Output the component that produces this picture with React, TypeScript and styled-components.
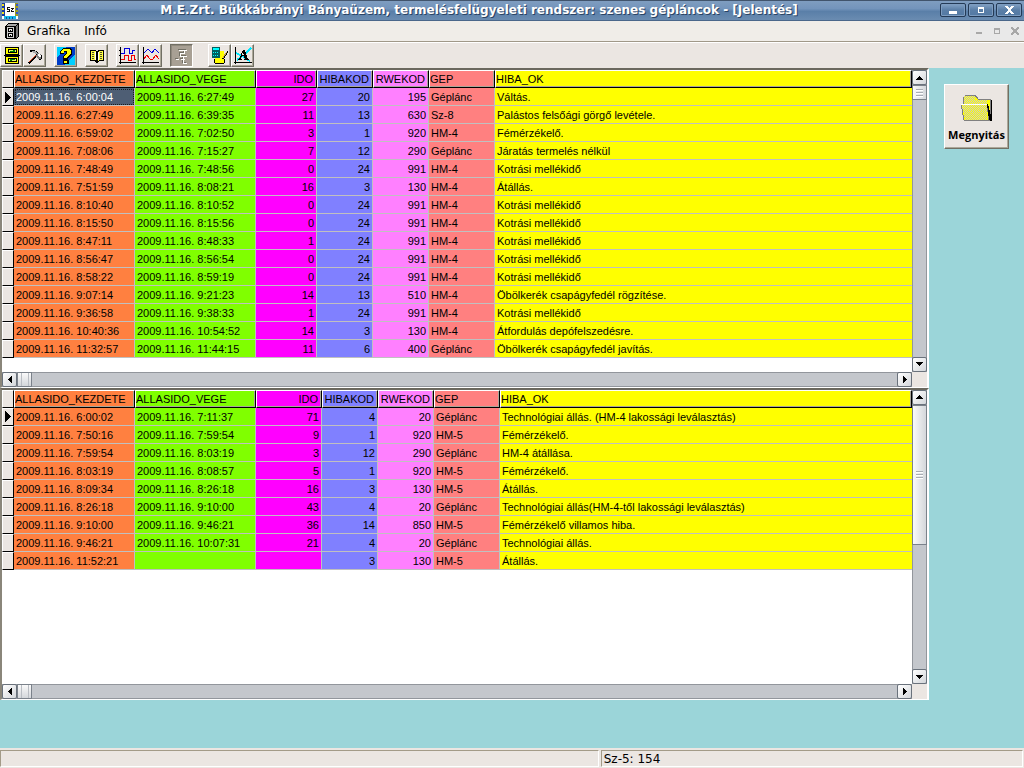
import React from 'react';
import styled, { createGlobalStyle, css } from 'styled-components';

const face = '#ebe6e2';
const uiFont = '"DejaVu Sans", Verdana, sans-serif';
const gridFont = '"Liberation Sans", Arial, sans-serif';

const GlobalStyle = createGlobalStyle`
  *, *::before, *::after { box-sizing: border-box; }
  body { margin: 0; background: #9bd5d9; font-family: ${uiFont}; font-size: 12px; color: #000; }
  button { font: inherit; color: inherit; border-radius: 0; margin: 0; padding: 0; }
`;

const Window = styled.div`
  min-height: 100vh;
  display: flex;
  flex-direction: column;
`;

const TitleBar = styled.header`
  height: 21px;
  display: flex;
  align-items: center;
  padding: 0 2px;
  border-top: 1px solid #41546c;
  border-bottom: 1px solid #4a678a;
  background: linear-gradient(#7f9dc0, #7394bb 40%, #5a7fa8 55%, #6a8cb1);
`;

const Title = styled.h1`
  flex: 1;
  margin: 0;
  text-align: center;
  font-size: 12px;
  line-height: 19px;
  font-weight: bold;
  color: #fff;
  white-space: nowrap;
  text-shadow: 1px 1px 0 #2a4364;
`;

const CaptionButtons = styled.div`
  display: flex;
  gap: 2px;
  padding-bottom: 1px;
`;

const CaptionButton = styled.button`
  width: 26px;
  height: 14px;
  display: flex;
  align-items: center;
  justify-content: center;
  border: 1px solid #243a56;
  border-radius: 2px;
  background: linear-gradient(#83a2c5, #5a7ea7 50%, #5379a3);
  box-shadow: inset 0 0 0 1px #7d9cc0;
`;

const MenuBar = styled.nav`
  height: 21px;
  display: flex;
  align-items: center;
  padding: 0 0 0 5px;
  background: #f0ede8;
  border-bottom: 1px solid #a09888;
`;

const MenuButton = styled.button`
  border: 0;
  background: none;
  height: 20px;
  padding: 0 7px;
  line-height: 18px;
`;

const MenuItems = styled.div`
  flex: 1;
  display: flex;
  padding-left: 1px;
`;

const ChildButtons = styled.div`
  display: flex;
  align-self: stretch;
  background: #e9e9e9;
`;

const ChildButton = styled.button`
  width: 18px;
  display: flex;
  align-items: center;
  justify-content: center;
  border: 0;
  background: none;
`;

const Toolbar = styled.div`
  height: 26px;
  display: flex;
  align-items: flex-start;
  gap: 8px;
  padding: 1px 0;
  background: ${face};
  border-top: 1px solid #fff;
`;

const ToolGroup = styled.div`
  display: flex;
  &:last-child { margin-left: 7px; }
`;

const ToolButton = styled.button<{ $down?: boolean }>`
  width: 23px;
  height: 23px;
  display: flex;
  align-items: center;
  justify-content: center;
  background: ${p => (p.$down ? '#a8a094' : face)};
  border: 1px solid;
  border-color: ${p => (p.$down ? '#716f64 #fff #fff #716f64' : '#fff #716f64 #716f64 #fff')};
  box-shadow: ${p => (p.$down ? 'inset 1px 1px 0 #8f897c' : 'inset -1px -1px 0 #aca899')};
`;

const Workspace = styled.main`
  flex: 1;
  display: flex;
  padding-bottom: 48px;
`;

const Panels = styled.div`
  flex: 1;
  min-width: 0;
  display: flex;
  flex-direction: column;
`;

const Panel = styled.section<{ $share: number }>`
  flex: ${p => p.$share} 0 0;
  display: grid;
  grid-template-columns: minmax(0, 1fr) 15px;
  grid-template-rows: minmax(0, 1fr) 15px;
  background: ${face};
  border: solid;
  border-width: 2px 2px 1px 2px;
  border-color: #6b685e #fff #fff #8a867a;
`;

const Viewport = styled.div`
  overflow: hidden;
  background: #fff;
`;

const Table = styled.table`
  width: 100%;
  table-layout: fixed;
  border-collapse: separate;
  border-spacing: 0;
  font-family: ${gridFont};
  font-size: 11px;
  line-height: 16px;
  white-space: nowrap;
`;

type Align = 'left' | 'right';

const HeadCell = styled.th<{ $bg: string; $align?: Align }>`
  height: 18px;
  padding: 0 3px 0 0;
  overflow: hidden;
  font-weight: normal;
  text-align: ${p => p.$align || 'left'};
  background: ${p => p.$bg};
  border: 1px solid;
  border-color: #fff #000 #000 #fff;
  box-shadow: inset -1px -1px 0 #a9a599;
`;

const Cell = styled.td<{ $bg: string; $align?: Align; $selected?: boolean }>`
  height: 18px;
  padding: 1px 2px 0;
  overflow: hidden;
  text-align: ${p => p.$align || 'left'};
  background: ${p => p.$bg};
  border: solid #c0c0c0;
  border-width: 0 1px 1px 0;
  &:last-child { border-right: 0; }
  ${p => p.$selected && css`
    background: #4e5e74;
    color: #fff;
    outline: 1px dotted #1c1c1c;
    outline-offset: -2px;
  `}
`;

const Indicator = styled.td`
  height: 18px;
  padding: 0;
  background: ${face};
  border: 1px solid;
  border-color: #fff #000 #000 #fff;
  svg { display: block; margin: 0 auto; }
`;

const ScrollTrack = styled.div<{ $vertical?: boolean }>`
  display: flex;
  flex-direction: ${p => (p.$vertical ? 'column' : 'row')};
  background: #c4c7cc;
  border: solid #92969c;
  border-width: ${p => (p.$vertical ? '0 1px' : '1px 0')};
`;

const ArrowButton = styled.button<{ $vertical?: boolean; $end?: boolean }>`
  flex: none;
  width: 15px;
  height: 15px;
  margin: ${p => (p.$vertical ? '0 -1px' : '-1px 0')};
  ${p => p.$end && (p.$vertical ? 'margin-top: auto;' : 'margin-left: auto;')}
  display: flex;
  align-items: center;
  justify-content: center;
  background: linear-gradient(135deg, #fff, #d3d6da);
  border: 1px solid #6a727c;
  border-radius: 2px;
`;

const Thumb = styled.div<{ $vertical?: boolean; $size: string }>`
  flex: 0 0 ${p => p.$size};
  display: flex;
  align-items: center;
  justify-content: center;
  border: 1px solid #7b828b;
  margin: ${p => (p.$vertical ? '0 -1px' : '-1px 0')};
  background: linear-gradient(${p => (p.$vertical ? '90deg' : '180deg')}, #fafafa, #d4d7db);
`;

const Side = styled.aside`
  width: 95px;
  padding: 16px 14px 0 15px;
`;

const OpenButton = styled.button`
  width: 65px;
  height: 65px;
  display: flex;
  flex-direction: column;
  align-items: center;
  justify-content: flex-end;
  gap: 5px;
  padding-bottom: 5px;
  background: ${face};
  border: 1px solid;
  border-color: #fff #716f64 #716f64 #fff;
  box-shadow: inset -1px -1px 0 #aca899;
  font-size: 11px;
  font-weight: bold;
  font-family: "Open Sans", "Liberation Sans", sans-serif;
  line-height: 16px;
  white-space: nowrap;
`;

const StatusBar = styled.footer`
  height: 20px;
  display: flex;
  gap: 2px;
  padding: 2px 1px 1px 0;
  background: ${face};
`;

const StatusPane = styled.div<{ $grow: number }>`
  flex: ${p => p.$grow} 0 0;
  padding-left: 2px;
  line-height: 16px;
  border: 1px solid;
  border-color: #a39b88 #fff #fff #a39b88;
`;

interface Column { name: string; bg: string; align?: Align; width?: number }

const makeColumns = (idoWidth: number): Column[] => [
  { name: 'ALLASIDO_KEZDETE', bg: '#ff8040', width: 121 },
  { name: 'ALLASIDO_VEGE', bg: '#80ff00', width: 121 },
  { name: 'IDO', bg: '#ff00ff', align: 'right', width: idoWidth },
  { name: 'HIBAKOD', bg: '#8080ff', align: 'right', width: 56 },
  { name: 'RWEKOD', bg: '#ff80ff', align: 'right', width: 56 },
  { name: 'GEP', bg: '#ff8080', width: 66 },
  { name: 'HIBA_OK', bg: '#ffff00' },
];

const D = '2009.11.16. ';
const upperRows = [
  [D + '6:00:04', D + '6:27:49', '27', '20', '195', 'Géplánc', 'Váltás.'],
  [D + '6:27:49', D + '6:39:35', '11', '13', '630', 'Sz-8', 'Palástos felsőági görgő levétele.'],
  [D + '6:59:02', D + '7:02:50', '3', '1', '920', 'HM-4', 'Fémérzékelő.'],
  [D + '7:08:06', D + '7:15:27', '7', '12', '290', 'Géplánc', 'Járatás termelés nélkül'],
  [D + '7:48:49', D + '7:48:56', '0', '24', '991', 'HM-4', 'Kotrási mellékidő'],
  [D + '7:51:59', D + '8:08:21', '16', '3', '130', 'HM-4', 'Átállás.'],
  [D + '8:10:40', D + '8:10:52', '0', '24', '991', 'HM-4', 'Kotrási mellékidő'],
  [D + '8:15:50', D + '8:15:56', '0', '24', '991', 'HM-4', 'Kotrási mellékidő'],
  [D + '8:47:11', D + '8:48:33', '1', '24', '991', 'HM-4', 'Kotrási mellékidő'],
  [D + '8:56:47', D + '8:56:54', '0', '24', '991', 'HM-4', 'Kotrási mellékidő'],
  [D + '8:58:22', D + '8:59:19', '0', '24', '991', 'HM-4', 'Kotrási mellékidő'],
  [D + '9:07:14', D + '9:21:23', '14', '13', '510', 'HM-4', 'Öbölkerék csapágyfedél rögzítése.'],
  [D + '9:36:58', D + '9:38:33', '1', '24', '991', 'HM-4', 'Kotrási mellékidő'],
  [D + '10:40:36', D + '10:54:52', '14', '3', '130', 'HM-4', 'Átfordulás depófelszedésre.'],
  [D + '11:32:57', D + '11:44:15', '11', '6', '400', 'Géplánc', 'Öbölkerék csapágyfedél javítás.'],
];
const lowerRows = [
  [D + '6:00:02', D + '7:11:37', '71', '4', '20', 'Géplánc', 'Technológiai állás. (HM-4 lakossági leválasztás)'],
  [D + '7:50:16', D + '7:59:54', '9', '1', '920', 'HM-5', 'Fémérzékelő.'],
  [D + '7:59:54', D + '8:03:19', '3', '12', '290', 'Géplánc', 'HM-4 átállása.'],
  [D + '8:03:19', D + '8:08:57', '5', '1', '920', 'HM-5', 'Fémérzékelő.'],
  [D + '8:09:34', D + '8:26:18', '16', '3', '130', 'HM-5', 'Átállás.'],
  [D + '8:26:18', D + '9:10:00', '43', '4', '20', 'Géplánc', 'Technológiai állás(HM-4-től lakossági leválasztás)'],
  [D + '9:10:00', D + '9:46:21', '36', '14', '850', 'HM-5', 'Fémérzékelő villamos hiba.'],
  [D + '9:46:21', D + '10:07:31', '21', '4', '20', 'Géplánc', 'Technológiai állás.'],
  [D + '11:52:21', '', '', '3', '130', 'HM-5', 'Átállás.'],
];

const Svg = ({ w, h, children }: { w: number; h: number; children: React.ReactNode }) => (
  <svg width={w} height={h} viewBox={`0 0 ${w} ${h}`} shapeRendering="crispEdges" aria-hidden="true">
    {children}
  </svg>
);

const arrows = {
  up: 'M3 0h1v1h1v1h1v1h1v1H0V3h1V2h1V1h1z',
  down: 'M0 0h7v1H6v1H5v1H4v1H3V3H2V2H1V1H0z',
  left: 'M4 0v7H3V6H2V5H1V4H0V3h1V2h1V1h1V0z',
  right: 'M0 0h1v1h1v1h1v1h1v1H3v1H2v1H1v1H0z',
};

const Arrow = ({ dir }: { dir: keyof typeof arrows }) => {
  const tall = dir === 'left' || dir === 'right';
  return <Svg w={tall ? 4 : 7} h={tall ? 7 : 4}><path d={arrows[dir]} /></Svg>;
};

function ScrollBar({ vertical, size, grip }: { vertical?: boolean; size: string; grip?: boolean }) {
  return (
    <ScrollTrack $vertical={vertical}>
      <ArrowButton $vertical={vertical} aria-label={vertical ? 'Fel' : 'Balra'}><Arrow dir={vertical ? 'up' : 'left'} /></ArrowButton>
      <Thumb $vertical={vertical} $size={size}>
        {grip
          ? <Svg w={7} h={8}><path d="M0 0h7v1H0zM0 3h7v1H0zM0 6h7v1H0z" fill="#a9adb4" /><path d="M0 1h7v1H0zM0 4h7v1H0zM0 7h7v1H0z" fill="#fff" /></Svg>
          : <Svg w={9} h={13}><path d="M1 0h1v13H1zM8 0h1v13H8z" fill="#b9bdc3" /></Svg>}
      </Thumb>
      <ArrowButton $vertical={vertical} $end aria-label={vertical ? 'Le' : 'Jobbra'}><Arrow dir={vertical ? 'down' : 'right'} /></ArrowButton>
    </ScrollTrack>
  );
}

interface GridProps { share: number; idoWidth: number; rows: string[][]; thumb: string; selected?: boolean }

function DataGrid({ share, idoWidth, rows, thumb, selected }: GridProps) {
  const columns = makeColumns(idoWidth);
  return (
    <Panel $share={share}>
      <Viewport>
        <Table>
          <colgroup>
            <col width={12} />
            {columns.map(c => <col key={c.name} width={c.width} />)}
          </colgroup>
          <thead>
            <tr>
              <Indicator />
              {columns.map(c => <HeadCell key={c.name} $bg={c.bg} $align={c.align}>{c.name}</HeadCell>)}
            </tr>
          </thead>
          <tbody>
            {rows.map((row, r) => (
              <tr key={row[0]}>
                <Indicator>{r === 0 && <Svg w={6} h={11}><path d="M0 0h1v1h1v1h1v1h1v1h1v1h1v1H5v1H4v1H3v1H2v1H1v1H0z" /></Svg>}</Indicator>
                {row.map((v, i) => (
                  <Cell key={i} $bg={columns[i].bg} $align={columns[i].align} $selected={selected && r === 0 && i === 0}>{v}</Cell>
                ))}
              </tr>
            ))}
          </tbody>
        </Table>
      </Viewport>
      <ScrollBar vertical size={thumb} grip />
      <ScrollBar size="15px" />
    </Panel>
  );
}

const AppIcon = () => (
  <Svg w={16} h={16}>
    <path d="M0 0h16v16H0z" fill="#fff" />
    <path d="M0 0h3v13H0z" fill="#173a9c" />
    <path d="M0 1h2v2H0zM0 5h2v2H0zM0 9h2v2H0z" fill="#f5e51b" />
    <path d="M13 0h3v13h-3z" fill="#9b9b20" />
    <path d="M14 1h2v2h-2zM14 5h2v2h-2zM14 9h2v2h-2z" fill="#3558cc" />
    <path d="M2 13h12v3H2z" fill="#14b8e8" />
    <path d="M4 14h1v2H4zM7 14h1v2H7zM10 14h1v2h-1z" fill="#0c4f9c" />
    <path d="M5 4h3v1H5zM5 5h1v1H5zM5 6h3v1H5zM7 7h1v1H7zM5 8h3v1H5zM9 5h3v1H9zM10 6h1v1h-1zM9 7h1v1H9zM9 8h3v1H9z" fill="#111" />
  </Svg>
);

const CabinetIcon = () => (
  <Svg w={14} h={16}>
    <path d="M3 0h10l1 1v12l-3 3H1l-1-1V3z" />
    <path d="M3 1h9l-2 2H2z" fill="#aaa" />
    <path d="M2 4h7v11H2z" fill="#ccc" />
    <path d="M11 3l2-2v12l-2 2z" fill="#777" />
    <path d="M3 5h5v4H3zM3 10h5v4H3z" />
    <path d="M4 6h3v2H4zM4 11h3v2H4z" fill="#eee" />
    <path d="M5 7h1v1H5zM5 12h1v1H5z" />
  </Svg>
);

const DrawersIcon = () => (
  <Svg w={16} h={17}>
    <path d="M1 0h14v8H1zM1 9h14v8H1zM0 8h16v1H0z" />
    <path d="M2 1h12v6H2zM2 10h12v6H2z" fill="#ffff00" />
    <path d="M4 2h9v4H4zM4 11h9v4H4z" />
    <path d="M5 3h7v2H5zM5 12h7v2H5z" fill="#e8ff60" />
    <path d="M6 4h5v1H6zM9 3h2v1H9zM6 12h5v1H6zM6 13h2v1H6z" fill="#008000" />
  </Svg>
);

const HammerIcon = () => (
  <Svg w={16} h={16}>
    <path d="M9 6l2 1-8 9-2-1z" />
    <path d="M8 7h1v1H8zM7 8h1v1H7zM6 9h1v1H6zM5 10h1v1H5zM4 11h1v1H4zM3 12h1v1H3zM2 13h1v1H2z" fill="#d04020" />
    <path d="M3 2h5v1h2v1h1v3H9V5H7V4H3z" />
    <path d="M5 3h4v1h1v2H8V5H6z" fill="#a8a8a8" />
    <path d="M10 5h2v1h2v5h-3v-1h-1V9H9V7h1z" fill="#808080" />
    <path d="M11 6h2v1h1v2h-2V8h-1z" fill="#fff" />
    <path d="M12 11h2v1h-2zM14 7h1v4h-1z" />
  </Svg>
);

const HelpIcon = () => (
  <Svg w={18} h={18}>
    <path d="M0 0h18v18H0z" fill="#003cc8" />
    <path d="M0 0h9L0 11zM18 7v11H8z" fill="#00cfff" />
    <path d="M6 1h7l2 2v5l-4 3v2H6V9l3-3V5H7v2H3V4z" />
    <path d="M6 2h6l2 2v3l-4 3v1H7V9l3-3V4H7v2H4V4z" fill="#ffff00" />
    <path d="M6 13h6v4H6z" /><path d="M7 14h3v2H7z" fill="#ffff00" />
  </Svg>
);

const BookIcon = () => (
  <Svg w={16} h={14}>
    <path d="M1 1h5l2 1 2-1h5v11h-5l-1 2H7l-1-2H1z" />
    <path d="M2 2h4l1 1v9l-1-1H2zM14 2h-4L9 3v9l1-1h4z" fill="#ffff40" />
    <path d="M3 3h2v1H3zM3 5h2v1H3zM3 7h2v1H3zM3 9h2v1H3zM11 3h2v1h-2zM11 5h2v1h-2zM11 7h2v1h-2zM11 9h2v1h-2z" fill="#505030" />
    <path d="M6 3h1v8H6zM9 3h1v8H9z" fill="#fff" />
  </Svg>
);

const StepChartIcon = () => (
  <Svg w={17} h={17}>
    <path d="M1 0v17M0 15h17M0 3h2M0 8h2" stroke="#000" fill="none" strokeWidth="1" />
    <path d="M2 6h3V1h5v5h3V3h3" stroke="#0000e0" fill="none" />
    <path d="M2 12h3V8h4v5h3V8h3v4h2" stroke="#f00000" fill="none" />
  </Svg>
);

const LineChartIcon = () => (
  <Svg w={17} h={17}>
    <path d="M1 0v17M0 15h17" stroke="#000" fill="none" />
    <path d="M2 6l4-4 4 4 3-4 4 4" stroke="#0000e0" fill="none" />
    <path d="M2 12l3-4 3 4 2 1 4-5 3 4" stroke="#f00000" fill="none" />
  </Svg>
);

const TreeIcon = () => (
  <Svg w={18} h={18}>
    <path d="M6 3h8M11 3v3H7v3h7M10 9v3M3 12h3M8 12h4M10 12v4h4" stroke="#716f64" fill="none" transform="translate(-1 -1)" />
    <path d="M6 3h8M11 3v3H7v3h7M10 9v3M3 12h3M8 12h4M10 12v4h4" stroke="#fff" fill="none" />
  </Svg>
);

const CalculatorIcon = () => (
  <Svg w={18} h={18}>
    <path d="M4 4h9v12H4z" fill="#ffff00" />
    <path d="M1 0h8v11H1z" fill="#006060" />
    <path d="M2 1h6v2H2zM2 5h1v1H2zM4 5h1v1H4zM6 5h1v1H6zM2 8h1v1H2zM4 8h1v1H4zM6 8h1v1H6z" fill="#00ffff" />
    <path d="M3 12h1v4H3zM4 16h9v1H4zM13 12h1v4h-1z" />
    <path d="M16 4h1v2h-1zM15 6h1v2h-1zM14 8h1v1h-1zM13 9h1v2h-1zM11 11h2v1h-2z" />
    <path d="M15 5h1v1h-1zM14 6h1v2h-1zM13 7h1v2h-1zM12 9h1v2h-1z" fill="#c8a040" />
  </Svg>
);

const FontChartIcon = () => (
  <Svg w={18} h={17}>
    <path d="M1 0v17M0 15h18" stroke="#000" fill="none" />
    <path d="M2 6l4 2 6-2 5-5M3 13l5-4 8 5" stroke="#00e8ff" fill="none" strokeWidth="2" />
    <path d="M9 3h2l3 9h1v1h-5v-1h1l-1-3H8l-1 3h1v1H4v-1h1z" />
    <path d="M9 5l1 3H8z" fill="#ebe6e2" />
  </Svg>
);

// Every second pixel of the folder face, in a checkerboard.
const folderDither = Array.from({ length: 24 }, (_, i) => i + 2)
  .flatMap(y => {
    const front = y > 10;
    const left = front ? 1 + Math.ceil((y - 10) / 4) : 4;
    const right = front ? 27 : y > 5 ? 27 : 15;
    return Array.from({ length: right - left }, (_, i) => left + i)
      .filter(x => (x + y) % 2 === 0)
      .map(x => `M${x} ${y}h1v1h-1z`);
  })
  .join('');

const FolderIcon = () => (
  <Svg w={33} h={28}>
    <path d="M29 6h3v21H5v-1h24z" />
    <path d="M3 10V4l3-3h9l3 4h12v20H5z" fill="#ffff00" stroke="#808080" />
    <path d="M1 10h26l2 16H4z" fill="#ffff00" stroke="#808080" />
    <path d={folderDither} fill="#c8c8c8" />
    <path d="M1 10h26v1H1z" fill="#fff" />
    <path d="M27 10h1l3 12v4h-2z" />
  </Svg>
);

export default function App() {
  return (
    <Window>
      <GlobalStyle />
      <TitleBar>
        <AppIcon />
        <Title>M.E.Zrt. Bükkábrányi Bányaüzem, termelésfelügyeleti rendszer: szenes gépláncok - [Jelentés]</Title>
        <CaptionButtons>
          <CaptionButton aria-label="Kis méret"><Svg w={8} h={8}><path d="M0 5h8v3H0z" fill="#fff" /></Svg></CaptionButton>
          <CaptionButton aria-label="Teljes méret"><Svg w={6} h={6}><path d="M0 0h6v6H0zM1 2v3h4V2z" fillRule="evenodd" fill="#fff" /></Svg></CaptionButton>
          <CaptionButton aria-label="Bezárás"><Svg w={9} h={8}><path d="M0 0h3v1h1v1h1V1h1V0h3v1H8v1H7v1H6v2h1v1h1v1h1v1H6V7H5V6H4v1H3v1H0V7h1V6h1V5h1V3H2V2H1V1H0z" fill="#fff" /></Svg></CaptionButton>
        </CaptionButtons>
      </TitleBar>
      <MenuBar>
        <CabinetIcon />
        <MenuItems>
          <MenuButton>Grafika</MenuButton>
          <MenuButton>Infó</MenuButton>
        </MenuItems>
        <ChildButtons>
          <ChildButton aria-label="Jelentés kis méret"><Svg w={6} h={6}><path d="M0 4h6v2H0z" fill="#a8a8a8" /></Svg></ChildButton>
          <ChildButton aria-label="Jelentés teljes méret"><Svg w={6} h={6}><path d="M0 0h6v6H0zM1 2v3h4V2z" fillRule="evenodd" fill="#a8a8a8" /></Svg></ChildButton>
          <ChildButton aria-label="Jelentés bezárása"><Svg w={8} h={8}><path d="M0 0h2v1h1v1h2V1h1V0h2v2H7v1H6v2h1v1h1v2H6V7H5V6H3v1H2v1H0V6h1V5h1V3H1V2H0z" fill="#a8a8a8" /></Svg></ChildButton>
        </ChildButtons>
      </MenuBar>
      <Toolbar>
        <ToolGroup>
          <ToolButton aria-label="Adatok"><DrawersIcon /></ToolButton>
          <ToolButton aria-label="Beállítások"><HammerIcon /></ToolButton>
        </ToolGroup>
        <ToolGroup><ToolButton aria-label="Súgó"><HelpIcon /></ToolButton></ToolGroup>
        <ToolGroup><ToolButton aria-label="Napló"><BookIcon /></ToolButton></ToolGroup>
        <ToolGroup>
          <ToolButton aria-label="Lépcsős grafikon"><StepChartIcon /></ToolButton>
          <ToolButton aria-label="Vonalas grafikon"><LineChartIcon /></ToolButton>
        </ToolGroup>
        <ToolGroup><ToolButton $down aria-label="Jelentés"><TreeIcon /></ToolButton></ToolGroup>
        <ToolGroup>
          <ToolButton aria-label="Számítás"><CalculatorIcon /></ToolButton>
          <ToolButton aria-label="Elemzés"><FontChartIcon /></ToolButton>
        </ToolGroup>
      </Toolbar>
      <Workspace>
        <Panels>
          <DataGrid share={320} idoWidth={61} rows={upperRows} thumb="15px" selected />
          <DataGrid share={312} idoWidth={66} rows={lowerRows} thumb="140px" />
        </Panels>
        <Side>
          <OpenButton><FolderIcon />Megnyitás</OpenButton>
        </Side>
      </Workspace>
      <StatusBar>
        <StatusPane $grow={600} />
        <StatusPane $grow={422}>Sz-5: 154</StatusPane>
      </StatusBar>
    </Window>
  );
}
